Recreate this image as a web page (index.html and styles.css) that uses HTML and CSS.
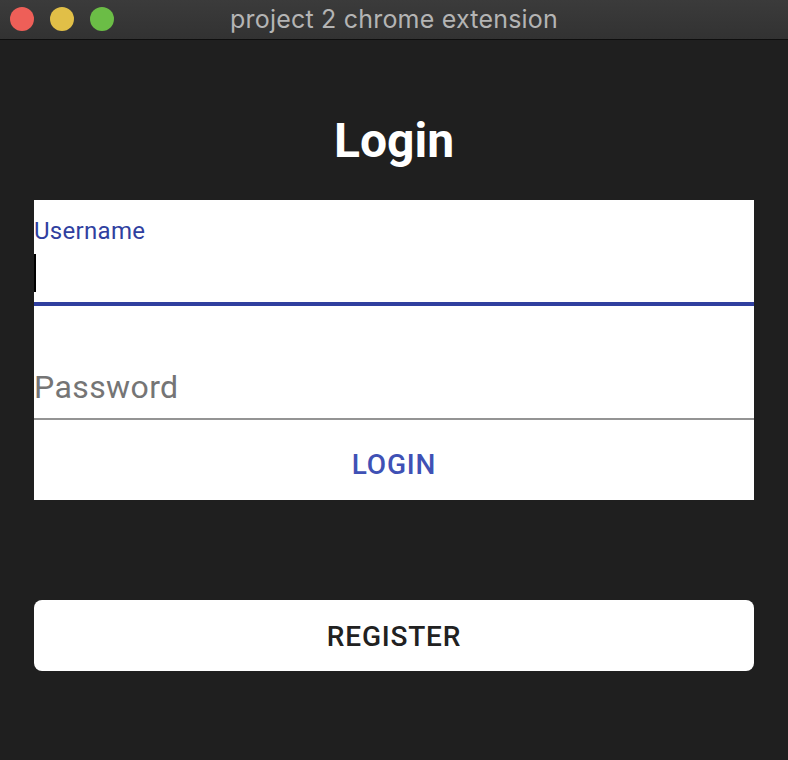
FILE: index.html
```html
<!DOCTYPE html>
<html lang="en">
<head>
<meta charset="utf-8">
<title>project 2 chrome extension</title>
<link rel="stylesheet" href="styles.css">
</head>
<body>
<div class="titlebar">
  <div class="lights">
    <span class="light red"></span>
    <span class="light yellow"></span>
    <span class="light green"></span>
  </div>
  <div class="title">project 2 chrome extension</div>
</div>
<main class="page">
  <h1 class="heading">Login</h1>
  <form class="form">
    <div class="field focused">
      <label class="label">Username</label>
      <div class="input-row"><span class="caret"></span></div>
      <div class="underline"></div>
    </div>
    <div class="field">
      <div class="placeholder">Password</div>
      <div class="underline grey"></div>
    </div>
    <div class="login-btn">LOGIN</div>
  </form>
  <div class="register-btn">REGISTER</div>
</main>
</body>
</html>
```
FILE: styles.css
```css
* { box-sizing: border-box; }
html, body { margin: 0; padding: 0; }
body {
  background: #1f1f1f;
  width: 788px;
  height: 760px;
  overflow: hidden;
  font-family: Roboto, "Liberation Sans", sans-serif;
}
.titlebar {
  height: 40px;
  position: relative;
  background: linear-gradient(#3b3b3b, #323232);
  border-bottom: 1px solid #0e0e0e;
  display: flex;
  align-items: center;
  justify-content: center;
}
.lights {
  position: absolute;
  left: 10px;
  top: 7px;
  display: flex;
  gap: 16px;
}
.light {
  width: 24px;
  height: 24px;
  border-radius: 50%;
  display: block;
}
.red { background: #ee5f58; }
.yellow { background: #e1bf47; }
.green { background: #6bbd46; }
.title {
  font-family: Inter, "Liberation Sans", Arial, sans-serif;
  font-size: 25px;
  letter-spacing: 0.2px;
  color: #b4b4b4;
  margin-top: -1px;
}
.page {
  padding: 0 34px;
  display: flex;
  flex-direction: column;
}
.heading {
  margin: 77px 0 0;
  font-size: 48px;
  line-height: 48px;
  font-weight: 700;
  color: #ffffff;
  text-align: center;
}
.form {
  margin-top: 35px;
  background: #ffffff;
  display: flex;
  flex-direction: column;
}
.field {
  display: flex;
  flex-direction: column;
}
.label {
  margin-top: 19px;
  font-size: 24px;
  line-height: 24px;
  letter-spacing: 0.3px;
  color: #303f9f;
}
.input-row {
  margin-top: 11px;
  height: 38px;
}
.caret {
  display: block;
  width: 2px;
  height: 38px;
  background: #000;
}
.underline {
  margin-top: 10px;
  height: 4px;
  background: #303f9f;
}
.placeholder {
  margin-top: 65px;
  font-size: 32px;
  line-height: 32px;
  letter-spacing: 0.4px;
  color: #757575;
}
.underline.grey {
  margin-top: 15px;
  height: 2px;
  background: #949494;
}
.login-btn {
  padding: 31px 0 21px;
  text-align: center;
  font-size: 28px;
  line-height: 28px;
  font-weight: 500;
  letter-spacing: 0.8px;
  color: #3f51b5;
}
.register-btn {
  margin-top: 100px;
  background: #ffffff;
  border-radius: 8px;
  padding: 23px 0 20px;
  text-align: center;
  font-size: 28px;
  line-height: 28px;
  font-weight: 500;
  letter-spacing: 0.8px;
  color: #212121;
}
```
